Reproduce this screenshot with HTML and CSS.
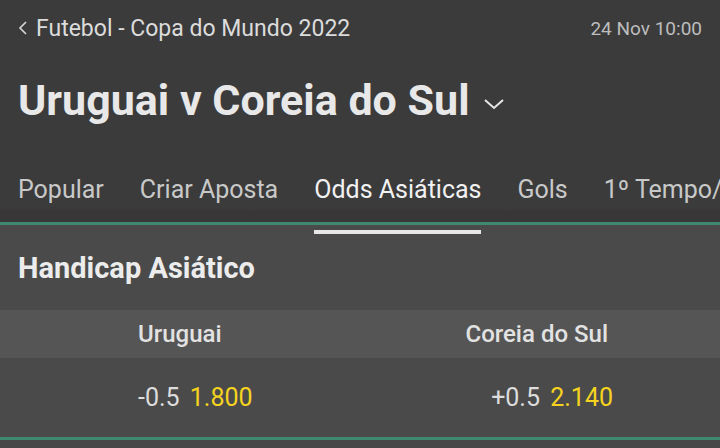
FILE: index.html
```html
<!DOCTYPE html>
<html lang="pt">
<head>
  <meta charset="UTF-8" />
  <title>Uruguai v Coreia do Sul</title>
  <link rel="stylesheet" href="styles.css">
</head>
<body>
  <div class="event-header">
    <div class="top-row">
      <a class="crumb" href="#">
        <svg class="back" width="10" height="16" viewBox="0 0 10 16"><path d="M8 2 L2 8 L8 14" fill="none" stroke="#d8d8d8" stroke-width="1.6"/></svg>
        Futebol - Copa do Mundo 2022
      </a>
      <span class="date">24 Nov 10:00</span>
    </div>

    <h1 class="title">
      Uruguai v Coreia do Sul
      <svg class="drop" width="20" height="12" viewBox="0 0 20 12"><path d="M1 2 L10 10 L19 2" fill="none" stroke="#e6e6e6" stroke-width="2"/></svg>
    </h1>

    <nav class="tabs">
      <a href="#">Popular</a>
      <a href="#">Criar Aposta</a>
      <a href="#" class="active">Odds Asiáticas</a>
      <a href="#">Gols</a>
      <a href="#">1º Tempo/Final</a>
    </nav>
  </div>

  <section class="market">
    <h2>Handicap Asiático</h2>
    <div class="grid head">
      <span class="c1">Uruguai</span>
      <span class="c2">Coreia do Sul</span>
    </div>
    <div class="grid odds">
      <span class="c1">-0.5 <b>1.800</b></span>
      <span class="c2">+0.5 <b>2.140</b></span>
    </div>
  </section>
  <div class="rest"></div>
</body>
</html>
```

FILE: styles.css
```css
* {
  box-sizing: border-box;
  margin: 0;
  padding: 0;
}

body {
  font-family: Roboto, 'Noto Sans', sans-serif;
  background-color: #474747;
  color: #e6e6e6;
  width: 720px;
  overflow: hidden;
}

a {
  color: inherit;
  text-decoration: none;
}

.event-header {
  background: linear-gradient(#3b3b3b 0, #3b3b3b 208px, #383636 212px, #393838 222px);
  border-bottom: 3px solid #3f8a6e;
  height: 225px;
}

.top-row {
  display: flex;
  justify-content: space-between;
  align-items: center;
  padding: 14px 18px 0 18px;
  height: 42px;
}

.crumb {
  display: flex;
  align-items: center;
  gap: 8px;
  font-size: 23px;
  color: #dcdcdc;
}

.date {
  font-size: 19px;
  color: #bdbdbd;
}

.title {
  display: flex;
  align-items: center;
  gap: 14px;
  padding: 33px 18px 0 18px;
  font-size: 43px;
  font-weight: 700;
  color: #e8e8e8;
  height: 83px;
  line-height: 50px;
}

.title .drop {
  margin-top: 8px;
}

.tabs {
  display: flex;
  gap: 36px;
  padding: 51px 18px 0 18px;
  white-space: nowrap;
  height: 97px;
}

.tabs a {
  font-size: 25px;
  line-height: 28px;
  color: #c9c9c9;
  position: relative;
}

.tabs a.active {
  color: #f2f2f2;
}

.tabs a.active::after {
  content: '';
  position: absolute;
  left: 0;
  right: 0;
  top: 54px;
  height: 4px;
  background: #e8e6e6;
}

.market {
  background-color: #4a4a4a;
  border-bottom: 3px solid #3f8a6e;
}

.market h2 {
  font-size: 29px;
  font-weight: 700;
  line-height: 34px;
  color: #ececec;
  padding: 26px 18px 0 18px;
  height: 85px;
}

.grid {
  display: grid;
  grid-template-columns: 138px 1fr 1fr;
  align-items: center;
}

.grid .c1 {
  grid-column: 2;
}

.grid .c2 {
  grid-column: 3;
  text-align: right;
  padding-right: 107px;
}

.head .c2 {
  padding-right: 112px;
}

.head {
  background-color: #555555;
  height: 48px;
  font-size: 24px;
  font-weight: 500;
  color: #e2e2e2;
}

.odds {
  height: 79px;
  font-size: 25px;
  color: #dddddd;
}

.odds b {
  font-weight: 400;
  color: #f5d31f;
  margin-left: 4px;
}

.rest {
  height: 20px;
  background-color: #474747;
}
```
